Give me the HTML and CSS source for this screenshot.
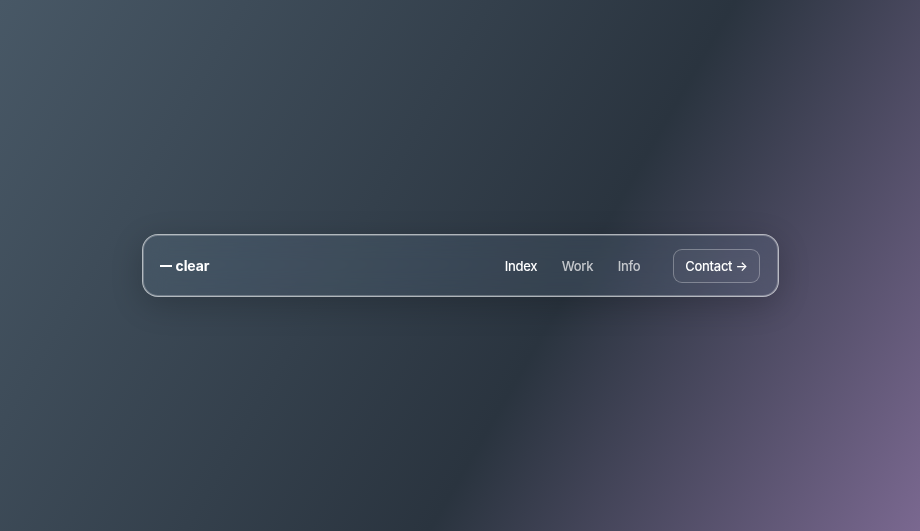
FILE: index.html
```html
<!DOCTYPE html>
<html lang="en">
<head>
    <meta charset="UTF-8">
    <meta name="viewport" content="width=device-width, initial-scale=1.0">
    <title>Clear</title>
    <link rel="stylesheet" href="styles.css">
</head>
<body>
    <nav class="glass-nav">
        <a class="logo" href="#"><span class="dash"></span>clear</a>
        <div class="links">
            <a class="link active" href="#">Index</a>
            <a class="link" href="#">Work</a>
            <a class="link" href="#">Info</a>
            <a class="contact" href="#">Contact →</a>
        </div>
    </nav>
</body>
</html>
```

FILE: styles.css
```css
* {
    box-sizing: border-box;
}

body {
    margin: 0;
    min-height: 100vh;
    display: flex;
    justify-content: center;
    align-items: center;
    background: linear-gradient(120deg, #485866 0%, #2a343f 60%, #7a6890 100%);
    font-family: Inter, "Liberation Sans", sans-serif;
}

a {
    text-decoration: none;
    color: inherit;
}

.glass-nav {
    width: 637px;
    height: 63px;
    padding: 0 18px 0 17px;
    display: flex;
    justify-content: space-between;
    align-items: center;
    color: #fff;
    background: rgba(150, 180, 220, 0.11);
    border: 1px solid rgba(255, 255, 255, 0.6);
    border-radius: 16px;
    box-shadow: 0 8px 32px rgba(0, 0, 0, 0.2), inset 0 0 0 1px rgba(255, 255, 255, 0.25);
    backdrop-filter: blur(12px);
}

.logo {
    display: flex;
    align-items: center;
    gap: 4px;
    font-size: 14px;
    font-weight: 700;
    letter-spacing: -0.1px;
}

.dash {
    width: 12px;
    height: 2px;
    background: #fff;
}

.links {
    display: flex;
    align-items: center;
    gap: 24.5px;
    font-size: 13px;
    font-weight: 500;
    letter-spacing: -0.3px;
}

.link {
    color: rgba(255, 255, 255, 0.7);
}

.link.active {
    color: #fff;
}

.contact {
    margin-left: 8.5px;
    padding: 8px 11px;
    border: 1px solid rgba(255, 255, 255, 0.3);
    border-radius: 9px;
    background: rgba(255, 255, 255, 0.03);
}
```
